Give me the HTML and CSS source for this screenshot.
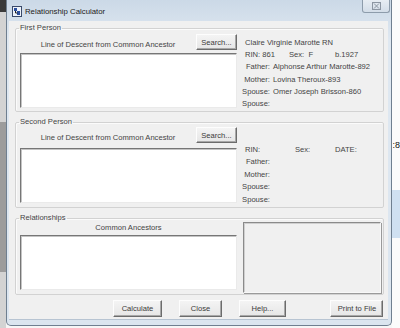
FILE: index.html
```html
<!DOCTYPE html>
<html lang="en">
<head>
    <meta charset="UTF-8">
    <title>Relationship Calculator</title>
    <link rel="stylesheet" href="styles.css">
</head>
<body>
    <div class="desk desk-left">
        <div class="mark mark-top"></div>
        <div class="mark mark-band"></div>
    </div>

    <div class="window">
        <div class="titlebar">
            <svg class="app-icon" width="10" height="11" viewBox="0 0 10 11">
                <rect x="0.5" y="0.5" width="9" height="10" fill="#eef3fa" stroke="#3a4a6a"/>
                <rect x="2" y="2" width="3" height="3" fill="#2b4f9e"/>
                <rect x="5" y="5" width="3" height="4" fill="#2b4f9e"/>
                <path d="M3.5 5v2h2" stroke="#222" fill="none"/>
            </svg>
            <span class="title">Relationship Calculator</span>
            <div class="close-btn">
                <svg width="9" height="8" viewBox="0 0 9 8">
                    <rect x="0.5" y="0.5" width="8" height="7" fill="none" stroke="#8c96a2"/>
                    <path d="M2 1.5l5 5M7 1.5l-5 5" stroke="#8c96a2"/>
                </svg>
            </div>
        </div>

        <div class="client">
            <!-- first person -->
            <fieldset class="group group-first">
                <legend>First Person</legend>
                <div class="person">
                    <div class="descent">
                        <div class="descent-head">
                            <span>Line of Descent from Common Ancestor</span>
                            <button class="btn btn-search">Search...</button>
                        </div>
                        <div class="listbox"></div>
                    </div>
                    <div class="info">
                        <div class="line name">Claire Virginie Marotte RN</div>
                        <div class="line rin">
                            <span>RIN: 861</span>
                            <span>Sex: &nbsp;F</span>
                            <span>b.1927</span>
                        </div>
                        <div class="line"><span class="lbl">Father:</span><span>Alphonse Arthur Marotte-892</span></div>
                        <div class="line"><span class="lbl">Mother:</span><span>Lovina Theroux-893</span></div>
                        <div class="line"><span class="lbl">Spouse:</span><span>Omer Joseph Brisson-860</span></div>
                        <div class="line"><span class="lbl">Spouse:</span><span></span></div>
                    </div>
                </div>
            </fieldset>

            <!-- second person -->
            <fieldset class="group group-second">
                <legend>Second Person</legend>
                <div class="person">
                    <div class="descent">
                        <div class="descent-head">
                            <span>Line of Descent from Common Ancestor</span>
                            <button class="btn btn-search">Search...</button>
                        </div>
                        <div class="listbox"></div>
                    </div>
                    <div class="info">
                        <div class="line name"></div>
                        <div class="line rin rin-empty">
                            <span>RIN:</span>
                            <span>Sex:</span>
                            <span>DATE:</span>
                        </div>
                        <div class="line"><span class="lbl">Father:</span><span></span></div>
                        <div class="line"><span class="lbl">Mother:</span><span></span></div>
                        <div class="line"><span class="lbl">Spouse:</span><span></span></div>
                        <div class="line"><span class="lbl">Spouse:</span><span></span></div>
                    </div>
                </div>
            </fieldset>

            <!-- relationships -->
            <fieldset class="group group-rel">
                <legend>Relationships</legend>
                <div class="relations">
                    <div class="ancestors">
                        <div class="ancestors-head">Common Ancestors</div>
                        <div class="listbox"></div>
                    </div>
                    <div class="result-panel"></div>
                </div>
            </fieldset>

            <div class="actions">
                <button class="btn">Calculate</button>
                <button class="btn">Close</button>
                <button class="btn">Help...</button>
                <button class="btn btn-print">Print to File</button>
            </div>
        </div>
    </div>

    <div class="desk desk-right">
        <div class="peek peek-text">:8</div>
        <div class="peek peek-blue"></div>
    </div>
</body>
</html>
```

FILE: styles.css
```css
/* Page and desktop behind the dialog */
body {
    margin: 0;
    padding: 0;
    width: 400px;
    height: 328px;
    overflow: hidden;
    display: flex;
    background-color: #f6f6f6;
    font-family: 'Liberation Sans', Arial, sans-serif;
    font-size: 7.6px;
    color: #444;
}

.desk {
    height: 328px;
}

.desk-left {
    width: 6px;
    display: flex;
    flex-direction: column;
    background-color: #d3d3d3;
}

.mark-top {
    height: 12px;
    background-color: #3a3a3a;
}

.mark-band {
    height: 150px;
    margin-top: 110px;
    background-color: #9c9c9c;
}

.desk-right {
    flex: 1;
    display: flex;
    flex-direction: column;
    background-color: #fbfbfb;
}

.peek-text {
    margin-top: 140px;
    font-size: 9px;
    line-height: 10px;
    color: #111;
}

.peek-blue {
    height: 48px;
    margin-top: 40px;
    background-color: #cfe0f1;
}

/* Window frame */
.window {
    width: 387px;
    height: 326px;
    border: 1px solid #6f7f90;
    border-top: none;
    border-radius: 0 0 5px 5px;
    background: linear-gradient(#cbd9e7, #dfe8f1 40px, #dbe5ef);
    padding: 0 3px 0 2px;
    box-sizing: border-box;
    display: flex;
    flex-direction: column;
}

.titlebar {
    height: 21px;
    flex-shrink: 0;
    display: flex;
    align-items: center;
    padding-left: 3px;
}

.app-icon {
    margin-top: 1px;
}

.title {
    margin-left: 3px;
    margin-top: 1px;
    font-size: 7.8px;
    color: #222;
}

.close-btn {
    margin-left: auto;
    margin-right: -2px;
    align-self: flex-start;
    width: 28px;
    height: 13px;
    box-sizing: border-box;
    border: 1px solid #8d9cab;
    border-top: none;
    border-radius: 0 0 3px 3px;
    background: linear-gradient(#e7edf3, #d3dde8);
    display: flex;
    align-items: center;
    justify-content: center;
}

.client {
    flex: 1;
    min-height: 0;
    margin-bottom: 5px;
    background-color: #f0f0f0;
    border-bottom: 1px solid #b7c4d2;
    display: flex;
    flex-direction: column;
}

/* Group boxes */
.group {
    flex-shrink: 0;
    margin: 5px 4px 0 6px;
    padding: 0 2px 3px 4px;
    border: 1px solid #d2d2d2;
    border-radius: 2px;
    box-shadow: inset 1px 1px #fbfbfb;
    min-width: 0;
}

.group legend {
    padding: 0 1px;
    margin-left: -1px;
    line-height: 10px;
    color: #444;
}

.group-first {
    margin-top: 2px;
    padding-top: 1px;
}

.group-second {
    padding-top: 0;
    padding-bottom: 4px;
}

.group-rel {
    padding-bottom: 0;
}

.person {
    display: grid;
    grid-template-columns: 217px 1fr;
    column-gap: 5px;
    align-items: start;
}

.descent-head {
    display: flex;
    align-items: flex-end;
}

.descent-head span {
    flex: 1;
    text-align: center;
    line-height: 10px;
}

.listbox {
    height: 55px;
    margin-top: 3px;
    box-sizing: border-box;
    background-color: #fff;
    border: 1px solid;
    border-color: #767676 #eaeaea #eaeaea #767676;
    box-shadow: inset 1px 1px #c4c4c4;
}

.group-second .listbox {
    margin-top: 5px;
}

/* Person details */
.info {
    padding-top: 3px;
    margin-bottom: -6px;
}

.group-second .info {
    padding-top: 4px;
    margin-bottom: -8px;
}

.line {
    height: 12.2px;
    line-height: 12.2px;
    display: flex;
    white-space: nowrap;
}

.group-second .line {
    height: 12.5px;
    line-height: 12.5px;
}

.line.name,
.line.rin {
    padding-left: 3px;
}

.rin span:first-child {
    width: 44px;
}

.rin span:nth-child(2) {
    width: 46px;
}

.rin-empty span:first-child {
    width: 50px;
}

.rin-empty span:nth-child(2) {
    width: 40px;
}

.lbl {
    width: 28px;
    margin-right: 3px;
    text-align: right;
}

/* Relationships */
.relations {
    display: grid;
    grid-template-columns: 217px 1fr;
    column-gap: 6px;
    align-items: start;
}

.ancestors-head {
    text-align: center;
    line-height: 10px;
}

.ancestors .listbox {
    margin-top: 2px;
}

.result-panel {
    height: 71px;
    margin-top: -1px;
    margin-bottom: 1px;
    box-sizing: border-box;
    border: 1px solid;
    border-color: #8a8a8a #f8f8f8 #f8f8f8 #8a8a8a;
    box-shadow: inset 1px 1px #cfcfcf, 1px 1px #9a9a9a;
}

/* Buttons */
.btn {
    height: 16px;
    padding: 0;
    box-sizing: border-box;
    font-family: 'Liberation Sans', Arial, sans-serif;
    font-size: 7.6px;
    color: #3a3a3a;
    background: linear-gradient(#f4f4f4, #e6e6e6);
    border: 1px solid;
    border-color: #fdfdfd #6c6c6c #6c6c6c #fdfdfd;
    box-shadow: inset -1px -1px #a8a8a8;
    border-radius: 0;
}

.btn-search {
    width: 41px;
}

.actions {
    display: flex;
    flex-shrink: 0;
    gap: 17px;
    margin-top: 5px;
    padding: 0 5px 0 104px;
}

.actions .btn {
    height: 17px;
}

.actions .btn:nth-child(1) {
    width: 49px;
}

.actions .btn:nth-child(2) {
    width: 43px;
}

.actions .btn:nth-child(3) {
    width: 47px;
}

.actions .btn-print {
    width: 53px;
    margin-left: auto;
}
```
